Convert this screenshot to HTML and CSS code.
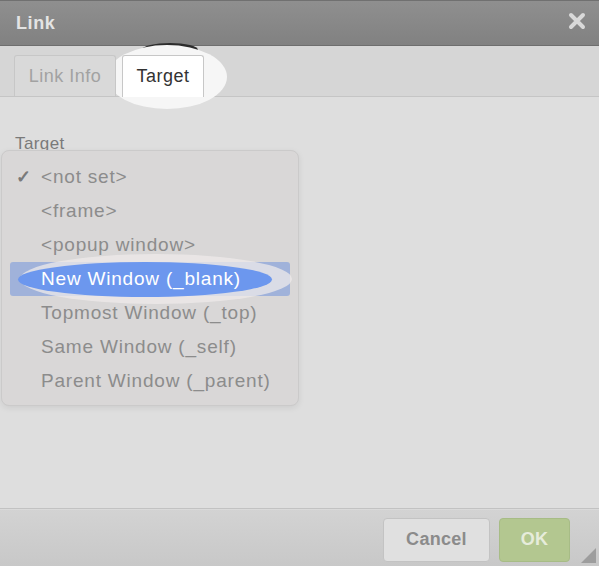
FILE: index.html
```html
<!DOCTYPE html>
<html lang="en">
<head>
    <meta charset="UTF-8">
    <title>Link</title>
    <link rel="stylesheet" href="styles.css">
</head>
<body>
    <div class="dialog">
        <div class="titlebar">
            <h1>Link</h1>
            <svg class="close" width="18" height="18" viewBox="0 0 18 18">
                <path d="M3 3 L15 15 M15 3 L3 15" stroke="#d9d9d9" stroke-width="4" stroke-linecap="round"/>
            </svg>
        </div>
        <div class="tabs">
            <div class="tab">Link Info</div>
            <div class="tab active">Target</div>
            <div class="tab-shadow"></div>
            <div class="tab-spot"></div>
        </div>
        <div class="content">
            <label class="field-label">Target</label>
            <ul class="menu">
                <li><span class="check">&#10003;</span>&lt;not set&gt;</li>
                <li>&lt;frame&gt;</li>
                <li>&lt;popup window&gt;</li>
                <li class="selected"><span class="spot"></span><span class="spot-inner"></span><span class="text">New Window (_blank)</span></li>
                <li>Topmost Window (_top)</li>
                <li>Same Window (_self)</li>
                <li>Parent Window (_parent)</li>
            </ul>
        </div>
        <div class="footer">
            <button class="btn cancel">Cancel</button>
            <button class="btn ok">OK</button>
            <span class="resize"></span>
        </div>
    </div>
</body>
</html>
```

FILE: styles.css
```css
* {
    margin: 0;
    padding: 0;
    box-sizing: border-box;
}

body {
    font-family: "Liberation Sans", Arial, sans-serif;
    width: 599px;
    height: 566px;
    overflow: hidden;
    background: #dedede;
}

.dialog {
    display: flex;
    flex-direction: column;
    height: 566px;
    position: relative;
}

.titlebar {
    height: 46px;
    display: flex;
    align-items: center;
    justify-content: space-between;
    padding: 0 13px 0 16px;
    background: linear-gradient(#8f8f8f, #818181);
    border-top: 1px solid #707070;
    border-bottom: 1px solid #6e6e6e;
}

.titlebar h1 {
    font-size: 18px;
    font-weight: bold;
    letter-spacing: 0.6px;
    color: #e4e4e4;
}

.close {
    margin-top: -5px;
}

.tabs {
    height: 51px;
    display: flex;
    align-items: flex-end;
    gap: 6px;
    padding-left: 14px;
    background: #d6d6d6;
    border-bottom: 1px solid #c5c5c5;
    position: relative;
}

.tab {
    width: 102px;
    height: 41px;
    display: flex;
    align-items: center;
    justify-content: center;
    font-size: 18px;
    letter-spacing: 0.5px;
    color: #a2a2a2;
    background: #d9d9d9;
    border: 1px solid #c7c7c7;
    border-bottom: none;
    border-radius: 3px 3px 0 0;
    position: relative;
    z-index: 3;
}

.tab.active {
    width: 82px;
    color: #333;
    background: #fff;
    height: 42px;
    margin-bottom: -1px;
}

.tab-shadow {
    position: absolute;
    left: 142px;
    top: -3px;
    width: 56px;
    height: 14px;
    border-radius: 50%;
    background: #2c2c2c;
    z-index: 1;
}

.tab-spot {
    position: absolute;
    left: 107px;
    top: -1px;
    width: 120px;
    height: 64px;
    border-radius: 50%;
    background: #f6f6f6;
    z-index: 2;
}

.content {
    flex: 1;
    position: relative;
    background: #dedede;
}

.field-label {
    display: block;
    margin: 37px 0 0 15px;
    font-size: 17px;
    letter-spacing: 0.4px;
    color: #7a7a7a;
}

.menu {
    position: absolute;
    left: 1px;
    top: 53px;
    width: 298px;
    height: 256px;
    list-style: none;
    padding-top: 9px;
    background: #d9d7d7;
    border: 1px solid #cbcaca;
    border-radius: 8px;
    box-shadow: 0 2px 6px rgba(0, 0, 0, 0.08);
}

.menu li {
    height: 34px;
    line-height: 34px;
    padding-left: 39px;
    font-size: 19px;
    letter-spacing: 0.8px;
    color: #8c8c8c;
    position: relative;
}

.check {
    position: absolute;
    left: 14px;
    font-size: 18px;
    font-weight: bold;
    color: #7a7a7a;
}

.menu li.selected {
    margin: 0 8px;
    padding-left: 31px;
    background: #a0b2da;
    border-radius: 3px;
    color: #fff;
}

.spot {
    position: absolute;
    left: 10px;
    top: -8px;
    width: 272px;
    height: 50px;
    border-radius: 50%;
    background: rgba(238, 233, 233, 0.75);
}

.spot-inner {
    position: absolute;
    left: 8px;
    top: 0;
    width: 254px;
    height: 35px;
    border-radius: 50%;
    background: #6c97ee;
}

.selected .text {
    position: relative;
}

.footer {
    height: 58px;
    display: flex;
    align-items: center;
    justify-content: flex-end;
    gap: 9px;
    padding: 0 29px 0 0;
    background: linear-gradient(#d3d3d3, #c8c8c8);
    border-top: 1px solid #c2c2c2;
    box-shadow: inset 0 1px 0 #dadada;
    position: relative;
}

.btn {
    height: 44px;
    margin-top: 4px;
    font-family: "Liberation Sans", Arial, sans-serif;
    font-size: 18px;
    font-weight: bold;
    letter-spacing: 0.3px;
    border-radius: 4px;
}

.cancel {
    width: 107px;
    color: #8b8b8b;
    background: #e0e0e0;
    border: 1px solid #c3c3c3;
}

.ok {
    width: 71px;
    color: #e6ecdb;
    background: #b3c790;
    border: 1px solid #a7bc86;
}

.resize {
    position: absolute;
    right: 3px;
    bottom: 3px;
    width: 0;
    height: 0;
    border-left: 15px solid transparent;
    border-bottom: 15px solid #9d9d9d;
}
```
